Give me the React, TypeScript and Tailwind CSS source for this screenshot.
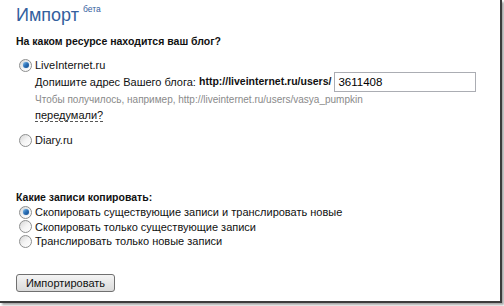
import { useState } from "react";

function Radio({ checked }: { checked: boolean }) {
  return (
    <span className="relative inline-flex h-[13px] w-[13px] shrink-0 items-center justify-center rounded-full border border-[#8e8f8f] bg-gradient-to-br from-[#d6d6d6] via-[#f4f4f4] to-[#ffffff]">
      {checked && (
        <span className="h-[6px] w-[6px] rounded-full bg-gradient-to-br from-[#7ec0ef] via-[#2b6fb5] to-[#0f4a8c] shadow-[0_0_1px_#6aa3d8]" />
      )}
    </span>
  );
}

function Option({ checked, label, onPick }: { checked: boolean; label: string; onPick: () => void }) {
  return (
    <label onClick={onPick} className="flex cursor-pointer items-center gap-[3px] pl-[3px] leading-[14px]">
      <Radio checked={checked} />
      <span>{label}</span>
    </label>
  );
}

export default function App() {
  const [source, setSource] = useState("li");
  const [mode, setMode] = useState(0);
  const [userId, setUserId] = useState("3611408");

  const modes = [
    "Скопировать существующие записи и транслировать новые",
    "Скопировать только существующие записи",
    "Транслировать только новые записи",
  ];

  return (
    <div className="h-[306px] w-[504px] bg-white">
      <div className="h-[303px] w-[502px] border-r-2 border-b-2 border-[#3c3c3c] bg-white pl-[16px] pt-[4px] text-[11px] text-[#111] shadow-[2px_2px_2px_rgba(0,0,0,0.35)] [font-family:'Liberation_Sans',Arial,sans-serif]">
        {/* title */}
        <div className="flex items-start leading-[22px]">
          <span className="text-[18px] text-[#33609e]">Импорт</span>
          <sup className="ml-[4px] mt-[5px] text-[8.5px] leading-[8px] text-[#33609e]">бета</sup>
        </div>

        <div className="mt-[7px] text-[10.5px] font-bold leading-[16px]">На каком ресурсе находится ваш блог?</div>

        <div className="mt-[9px]">
          <Option checked={source === "li"} label="LiveInternet.ru" onPick={() => setSource("li")} />
        </div>

        {source === "li" && (
          <div className="pl-[19px]">
            <div className="flex h-[20px] items-center">
              <span>Допишите адрес Вашего блога:&nbsp;</span>
              <b className="text-[10.5px]">http://liveinternet.ru/users/</b>
              <input
                value={userId}
                onChange={(e) => setUserId(e.target.value)}
                className="ml-[3px] h-[20px] w-[142px] border border-[#abadb3] px-[3px] text-[11.5px] text-black outline-none"
              />
            </div>
            <div className="mt-[1px] text-[10px] leading-[14px] text-[#8a8a8a]">
              Чтобы получилось, например, http://liveinternet.ru/users/vasya_pumpkin
            </div>
            <div className="mt-[1px] leading-[14px]">
              <span className="cursor-pointer border-b border-dashed border-[#555]">передумали?</span>
            </div>
          </div>
        )}

        <div className="mt-[11px]">
          <Option checked={source === "diary"} label="Diary.ru" onPick={() => setSource("diary")} />
        </div>

        <div className="mt-[43px] text-[10.5px] font-bold leading-[14px]">Какие записи копировать:</div>
        <div className="mt-[1px] flex flex-col gap-[0.5px]">
          {modes.map((m, i) => (
            <Option key={m} checked={mode === i} label={m} onPick={() => setMode(i)} />
          ))}
        </div>

        <button
          type="button"
          className="mt-[26px] h-[18px] w-[99px] rounded-[3px] border border-[#707070] bg-gradient-to-b from-[#f4f4f4] to-[#dadada] text-[11px] leading-[16px] text-[#111]"
        >
          Импортировать
        </button>
      </div>
    </div>
  );
}
